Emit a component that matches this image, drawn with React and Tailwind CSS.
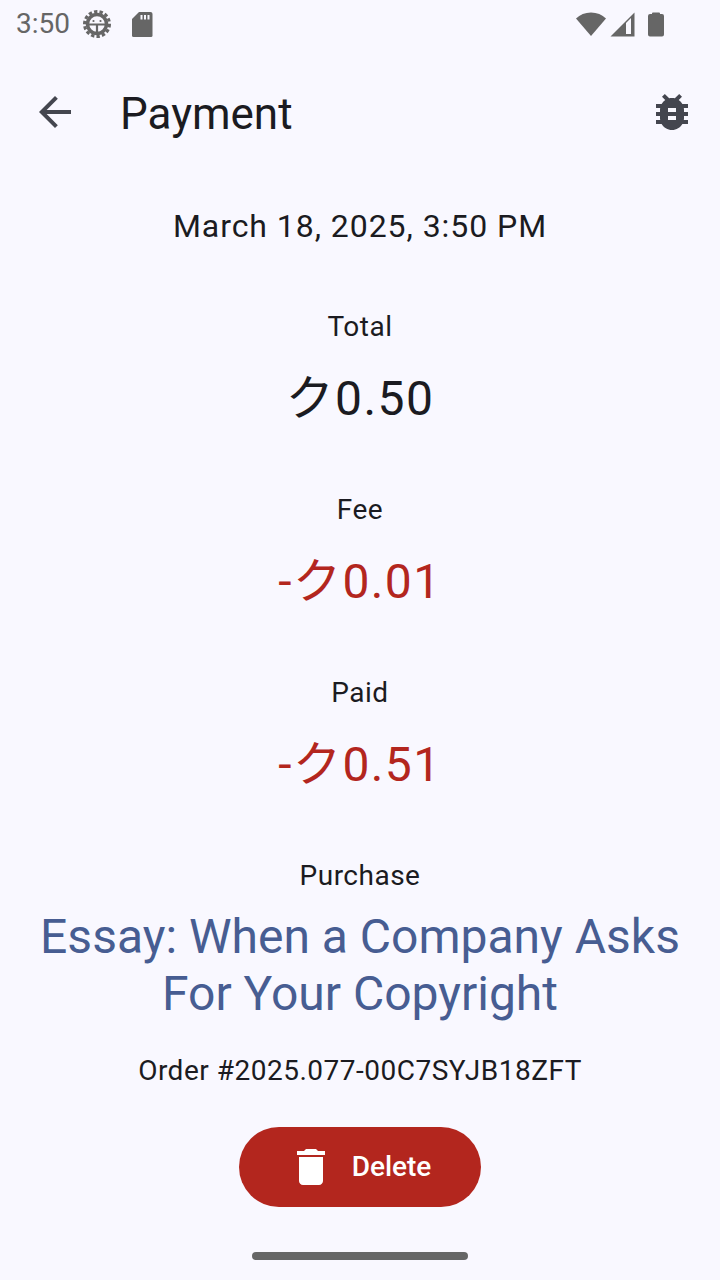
const BUG = "M20 8h-2.81c-.45-.78-1.07-1.45-1.82-1.96L17 4.41 15.59 3l-2.17 2.17C12.96 5.06 12.49 5 12 5c-.49 0-.96.06-1.41.17L8.41 3 7 4.41l1.62 1.63C7.88 6.55 7.26 7.22 6.81 8H4v2h2.09c-.05.33-.09.66-.09 1v1H4v2h2v1c0 .34.04.67.09 1H4v2h2.81c1.04 1.79 2.97 3 5.19 3s4.15-1.21 5.19-3H20v-2h-2.09c.05-.33.09-.66.09-1v-1h2v-2h-2v-1c0-.34-.04-.67-.09-1H20V8zm-6 8h-4v-2h4v2zm0-4h-4v-2h4v2z";
const ARROW = "M20 11H7.83l5.59-5.59L12 4l-8 8 8 8 1.41-1.41L7.83 13H20v-2z";
const TRASH = "M6 19c0 1.1.9 2 2 2h8c1.1 0 2-.9 2-2V7H6v12zM19 4h-3.5l-1-1h-5l-1 1H5v2h14V4z";

function StatusBar() {
  return (
    <div className="flex h-[48px] items-center pl-[16px] pr-[55px] text-[#666666]">
      <span className="w-[54px] text-[28px] leading-[48px]">3:50</span>
      {/* android settings gear */}
      <svg className="ml-[12px]" width="30" height="30" viewBox="0 0 30 30">
        <circle cx="15" cy="15" r="9.5" fill="none" stroke="#666666" strokeWidth="3.5" />
        <circle cx="15" cy="15" r="12.5" fill="none" stroke="#666666" strokeWidth="3" strokeDasharray="3.4 2.15" />
        <path d="M6 15.500h18M15 15.500v9" stroke="#666666" strokeWidth="2.2" />
        <circle cx="11.500" cy="12" r="1.100" fill="#666666" />
        <circle cx="18.500" cy="12" r="1.100" fill="#666666" />
      </svg>
      <svg className="ml-[19px]" width="22" height="26" viewBox="0 0 22 26">
        <path d="M8 1h11.500a2 2 0 0 1 2 2v21.500a1.500 1.500 0 0 1-1.500 1.500H2.500A1.500 1.500 0 0 1 1 24.500V8z" fill="#666666" />
        <path d="M9.500 4h2v4.500h-2zM13 4h2v4.500h-2zM16.500 4h2v4.500h-2z" fill="#f9f8ff" />
      </svg>
      <div className="ml-auto flex items-center">
        <svg width="32" height="26" viewBox="0 0 32 26">
          <path d="M1 7.500C5 3.500 10 1.500 16 1.500s11 2 15 6L16 25z" fill="#666666" />
        </svg>
        <svg className="ml-[2px]" width="26" height="26" viewBox="0 0 26 26">
          <path d="M25.500 1.500V25.500H1.500z" fill="#666666" />
          <path d="M17 12l5-5V23h-5z" fill="#f9f8ff" />
        </svg>
        <svg className="ml-[12px]" width="18" height="26" viewBox="0 0 18 26">
          <path d="M5 2.500q0-1 1-1h6q1 0 1 1v.500h2a2 2 0 0 1 2 2v18.500a2 2 0 0 1-2 2H3a2 2 0 0 1-2-2V5a2 2 0 0 1 2-2h2z" fill="#666666" />
        </svg>
      </div>
    </div>
  );
}

function Amount({ label, value, red }) {
  return (
    <div className="flex flex-col items-center">
      <p className="text-[28px] leading-[42px] tracking-[0.5px] text-[#1b1b21]">{label}</p>
      <p className={`mt-[19px] text-[48px] leading-[64px] tracking-[1.4px] ${red ? "text-[#b3261e]" : "text-[#1b1b21]"}`}>
        {value}
      </p>
    </div>
  );
}

export default function App() {
  return (
    <div
      className="relative flex h-[1280px] w-[720px] flex-col overflow-hidden bg-[#f9f8ff]"
      style={{ fontFamily: "Roboto, 'Noto Sans CJK JP', sans-serif" }}
    >
      <StatusBar />

      {/* top bar */}
      <div className="flex h-[128px] items-center pl-[31px] pr-[24px]">
        <svg width="48" height="48" viewBox="0 0 24 24" fill="#44464f">
          <path d={ARROW} />
        </svg>
        <h1 className="ml-[41px] mt-[3px] text-[44px] leading-[56px] text-[#1b1b21]">Payment</h1>
        <svg className="ml-auto" width="48" height="48" viewBox="0 0 24 24" fill="#44464f">
          <path d={BUG} />
        </svg>
      </div>

      <div className="flex flex-col items-center">
        <p className="mt-[28px] text-[32px] leading-[44px] tracking-[0.95px] text-[#1b1b21]">March 18, 2025, 3:50 PM</p>

        <div className="mt-[58px] flex flex-col gap-[58px]">
          <Amount label="Total" value="ク0.50" />
          <Amount label="Fee" value="-ク0.01" red />
          <Amount label="Paid" value="-ク0.51" red />
        </div>

        <p className="mt-[58px] text-[28px] leading-[42px] tracking-[0.5px] text-[#1b1b21]">Purchase</p>
        <p className="mt-[11px] w-[680px] text-center text-[48px] leading-[57px] text-[#475d92]">
          Essay: When a Company Asks For Your Copyright
        </p>
        <p className="mt-[28px] text-[28px] leading-[42px] tracking-[0.5px] text-[#1b1b21]">Order #2025.077-00C7SYJB18ZFT</p>

        <button className="mt-[35px] flex h-[80px] w-[242px] items-center justify-center rounded-full bg-[#b3261e] pr-[2px] text-white">
          <svg width="48" height="48" viewBox="0 0 24 24" fill="#ffffff">
            <path d={TRASH} />
          </svg>
          <span className="ml-[17px] text-[28px] font-medium leading-[40px]">Delete</span>
        </button>
      </div>

      {/* gesture handle */}
      <div className="absolute bottom-[20px] left-[252px] h-[8px] w-[216px] rounded-full bg-[#666666]" />
    </div>
  );
}
